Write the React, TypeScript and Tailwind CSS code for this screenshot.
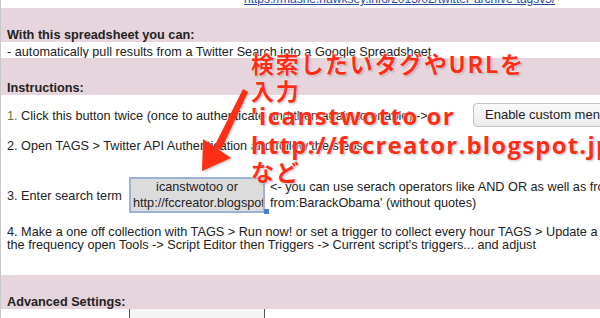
import React from "react";

const Band = ({ children }: { children: React.ReactNode }) => (
  <div className="flex items-end bg-[#e6d5dc] h-full pl-[6px] font-bold leading-[14px]">{children}</div>
);

const App = () => {
  return (
    <div className="relative w-[600px] h-[318px] overflow-hidden bg-white text-[12.7px] text-[#222] font-['Liberation_Sans',Arial,sans-serif]">
      <div className="flex h-full">
        {/* row header strip */}
        <div className="w-[4px] border-r border-[#c8c8c8] flex flex-col">
          <div className="h-[8px] border-b border-[#ddd]" />
          <div className="h-[34px] border-b border-[#ddd]" />
          <div className="h-[16px] border-b border-[#ddd]" />
          <div className="h-[37px] border-b border-[#ddd]" />
          <div className="h-[80px] border-b border-[#ddd]" />
          <div className="h-[38px] bg-[#d6d6d6] border-b border-[#ddd]" />
          <div className="h-[62px] border-b border-[#ddd]" />
          <div className="h-[35px] border-b border-[#ddd]" />
        </div>

        <div className="flex-1 flex flex-col">
          <div className="h-[8px] overflow-hidden pl-[243px]">
            <div className="-mt-[7px] leading-[13px] text-[12px] text-[#2a4c9a] underline whitespace-nowrap">
              https://mashe.hawksey.info/2013/02/twitter-archive-tagsv5/
            </div>
          </div>
          <div className="h-[34px]">
            <Band>
              <span>With this spreadsheet you can:</span>
            </Band>
          </div>
          <div className="h-[16px] pl-[6px] pt-[3px] leading-[14px] whitespace-nowrap">
            - automatically pull results from a Twitter Search into a Google Spreadsheet
          </div>
          <div className="h-[37px]">
            <Band>
              <span>Instructions:</span>
            </Band>
          </div>

          <div className="flex items-center h-[40px] pl-[6px] pt-[3px] whitespace-nowrap">
            <span className="w-[466px] shrink-0">
              <span className="text-[#5a7a4a]">1.</span> Click this button twice (once to authenticate and then again to enable) -&gt;
            </span>
            <button className="shrink-0 -mt-[3px] h-[24px] px-[11px] rounded-[4px] border border-[#c4c4c4] bg-gradient-to-b from-[#fafafa] to-[#ececec] text-[13px] text-[#222]">
              Enable custom menu
            </button>
          </div>
          <div className="h-[22px] pl-[6px] pt-[2px] whitespace-nowrap leading-[18px]">
            2. Open TAGS &gt; Twitter API Authentication and follow the steps
          </div>

          <div className="flex items-center h-[36px] mt-[20px] whitespace-nowrap">
            <span className="w-[128px] shrink-0 pl-[6px] pt-[4px]">3. Enter search term</span>
            <div className="w-[136px] shrink-0 h-[36px] border-2 border-[#9eb3d4] bg-[#dcdcdc] flex flex-col items-center justify-center overflow-hidden leading-[16px]">
              <span>icanstwotoo or</span>
              <span className="self-start pl-[2px]">http://fccreator.blogspot.jp</span>
            </div>
            <div className="flex flex-col pl-[5px] leading-[16px]">
              <span>&lt;- you can use serach operators like AND OR as well as from:</span>
              <span>from:BarackObama' (without quotes)</span>
            </div>
          </div>

          <div className="pl-[6px] pt-[13px] leading-[12.5px] whitespace-nowrap">
            <div>4. Make a one off collection with TAGS &gt; Run now! or set a trigger to collect every hour TAGS &gt; Update a</div>
            <div>the frequency open Tools -&gt; Script Editor then Triggers -&gt; Current script's triggers... and adjust</div>
          </div>

          <div className="h-[34px] mt-[24px]">
            <Band>
              <span>Advanced Settings:</span>
            </Band>
          </div>
          <div className="flex-1 flex">
            <div className="w-[128px]" />
            <div className="w-[136px] border-x border-[#555] bg-[#f4f4f4]" />
          </div>
        </div>
      </div>

      {/* resize handle of the search cell */}
      <div className="absolute left-[264px] top-[209px] w-[5px] h-[5px] bg-[#4a7fd0]" />

      {/* annotation arrow */}
      <svg className="absolute left-0 top-0" width="600" height="318" viewBox="0 0 600 318">
        <defs>
          <filter id="sh" x="-20%" y="-20%" width="140%" height="140%">
            <feDropShadow dx="1" dy="1" stdDeviation="1" floodColor="#000" floodOpacity="0.25" />
          </filter>
        </defs>
        <g filter="url(#sh)" fill="#ff2d18">
          <polygon points="243,89 248,92 221,150 214,147" />
          <polygon points="202,171 203,139 231,158" />
        </g>
      </svg>

      {/* annotation text */}
      <div className="absolute left-[251px] top-[50px] leading-[27px] font-bold text-[#ff2d18] whitespace-nowrap [text-shadow:0_0_2px_#fff,0_0_2px_#fff,1px_1px_2px_rgba(0,0,0,0.35)]">
        <div className="text-[23px] tracking-[1.7px] font-['Noto_Sans_CJK_JP',sans-serif]">検索したいタグやURLを</div>
        <div className="text-[23px] tracking-[1.7px] font-['Noto_Sans_CJK_JP',sans-serif]">入力</div>
        <div className="text-[24px] tracking-[1.5px] -mt-[2px] mb-[2px] font-['Open_Sans','Noto_Sans_CJK_JP',sans-serif]">'icanstwotto or</div>
        <div className="text-[24px] tracking-[1.2px] font-['Open_Sans','Noto_Sans_CJK_JP',sans-serif]">http://fccreator.blogspot.jp</div>
        <div className="text-[23px] tracking-[1.7px] font-['Noto_Sans_CJK_JP',sans-serif]">など</div>
      </div>
    </div>
  );
};

export default App;
